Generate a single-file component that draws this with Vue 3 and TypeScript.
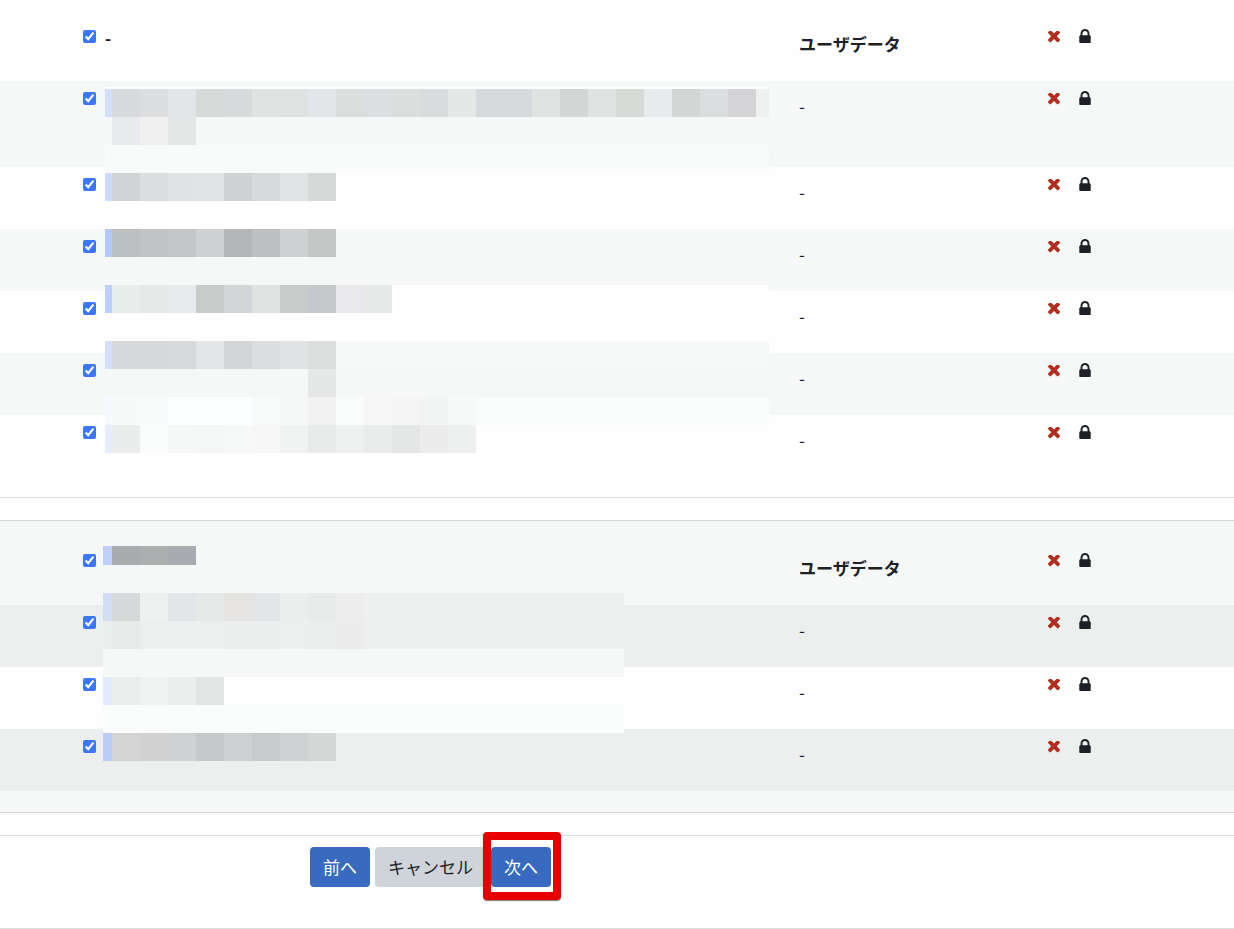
<script setup lang="ts">
interface Item {
  label?: string
  user: string
  tall?: boolean
}

interface Strip {
  height?: number
  fill: string
  cells?: string
}

interface Section {
  id: string
  tone: string
  items: Item[]
  strips: Strip[]
}

const sections: Section[] = [
  {
    id: 'first',
    tone: 'plain',
    items: [
      { label: '-', user: 'ユーザデータ' },
      { user: '-', tall: true },
      { user: '-' },
      { user: '-' },
      { user: '-' },
      { user: '-' },
      { user: '-' },
    ],
    strips: [
      { height: 3, fill: 'fbfdfc' },
      {
        fill: 'eff0f0',
        cells:
          'd2dffa d9dadc dcdddf e4e5e8 d8dad9 d9dadc e1e3e2 e0e2e1 e4e5e8 dcdedd dddee1 dcdedd dadbdd e6e8e7 d8d9dc d8d9dc e1e3e2 d4d6d5 e1e3e2 d8dad8 e9eaed d4d6d5 dcdddf d4d4d6',
      },
      { fill: 'f6f7f7', cells: 'f6f7f7 e9eaed eff0ef e5e7e6' },
      { fill: 'f9fbfa' },
      { fill: 'fefefe', cells: 'ccdbfd d2d3d5 dcdddf e1e2e4 e2e3e5 d1d2d4 d8d9db e2e3e5 d7d9d8' },
      { fill: 'fefefe' },
      { fill: 'f6f8f7', cells: 'b3c9f8 bebfc1 c2c3c5 c5c6c8 cfd0d2 b4b5b7 bebfc1 cfd0d2 c5c7c6' },
      { fill: 'f6f8f7' },
      { fill: 'fefefe', cells: 'bcd0fd ebedec e7e9e8 e9eaed c9cbca d4d5d8 e0e2e1 c9cbca c7c8cb e9e9ed e7e9e8' },
      { fill: 'fefefe' },
      { fill: 'f7f8f8', cells: 'd5dff9 d6d7d9 d7d8da d8d9db e4e5e7 d4d5d7 dbdcde e1e2e4 dddfde' },
      { fill: 'f6f7f7', cells: 'f6f7f7 f6f7f7 f6f7f7 f6f7f7 f6f7f7 f6f7f7 f6f7f7 f6f7f7 e6e8e7' },
      {
        fill: 'fbfdfc',
        cells: 'f6f9fd f8faf9 f9fbfa fdfffe fdfffe fdfffe f9fbfa f5f6f6 f3f2f2 fafbfb f5f6f5 f4f5f4 f2f4f3 f8faf9',
      },
      {
        fill: 'fefefe',
        cells: 'e6edfe ebeded fafbfb f6f8f7 f5f7f6 f7f8f8 f8f7f8 f0f1f1 e9ebea eff1f0 eaeceb e5e6e6 ebeceb eeefef',
      },
    ],
  },
  {
    id: 'second',
    tone: 'tinted',
    items: [{ user: 'ユーザデータ' }, { user: '-' }, { user: '-' }, { user: '-' }],
    strips: [
      { height: 19, fill: 'f6f8f7', cells: 'bfd0fb a8acaf adaeb0 a8abaf' },
      { fill: 'f6f8f7' },
      { fill: 'eef0ef', cells: 'd2def5 d7d8da eff0f0 e4e5e8 e7e9e8 e5e4e2 e4e5e8 eceeed e9ebea ecedec' },
      { fill: 'edefee', cells: 'eceeed e9ebea edefee edefee edefee eceeed eceeed edefee eceeed ebeceb' },
      { fill: 'f6f8f7' },
      { fill: 'fefefe', cells: 'e2eafe eceeed f0f2f1 eceeed e3e5e4' },
      { fill: 'fbfdfc' },
      { fill: 'edefee', cells: 'bdcef4 d4d4d4 d1d1d2 d0d1d3 c7c8ca cfd0d2 c9cacd d0d1d3 d5d7d6' },
    ],
  },
]

const cellsOf = (strip: Strip): string[] => (strip.cells ? strip.cells.split(' ') : [])
</script>

<template>
  <form class="page" @submit.prevent>
    <section v-for="s in sections" :key="s.id" class="section" :class="s.tone">
      <div v-for="(item, i) in s.items" :key="i" class="row" :class="{ tall: item.tall }">
        <div class="pick">
          <input
            :id="`${s.id}-${i}`"
            type="checkbox"
            checked
            :aria-label="item.label ? undefined : `項目 ${i + 1}`"
          />
        </div>
        <label class="name" :for="`${s.id}-${i}`">{{ item.label }}</label>
        <div class="user" :class="{ heading: i === 0 }">{{ item.user }}</div>
        <div class="state">
          <svg class="cross" viewBox="302 434 1188 1188" aria-hidden="true">
            <path
              d="M1490 1322q0 40-28 68l-136 136q-28 28-68 28t-68-28l-294-294-294 294q-28 28-68 28t-68-28l-136-136q-28-28-28-68t28-68l294-294-294-294q-28-28-28-68t28-68l136-136q28-28 68-28t68 28l294 294 294-294q28-28 68-28t68 28l136 136q28 28 28 68t-28 68l-294 294 294 294q28 28 28 68z"
            />
          </svg>
          <svg class="lock" viewBox="320 128 1152 1408" aria-hidden="true">
            <path
              d="M640 768h512v-192q0-106-75-181t-181-75-181 75-75 181v192zm832 96v576q0 40-28 68t-68 28h-960q-40 0-68-28t-28-68v-576q0-40 28-68t68-28h32v-192q0-184 132-316t316-132 316 132 132 316v192h32q40 0 68 28t28 68z"
            />
          </svg>
        </div>
      </div>
      <div class="mosaic" aria-hidden="true">
        <div
          v-for="(strip, r) in s.strips"
          :key="r"
          class="strip"
          :style="{ height: `${strip.height ?? 28}px`, background: `#${strip.fill}` }"
        >
          <span v-for="(c, k) in cellsOf(strip)" :key="k" class="cell" :style="{ background: `#${c}` }"></span>
        </div>
      </div>
    </section>

    <div class="actions">
      <button type="button" class="btn primary">前へ</button>
      <button type="button" class="btn secondary">キャンセル</button>
      <span class="marked">
        <button type="submit" class="btn primary">次へ</button>
      </span>
    </div>
  </form>
</template>

<style>
body {
  margin: 0;
  background: #fefefe;
}
</style>

<style scoped>
.page {
  color: #1d2125;
  font-family: 'Noto Sans CJK JP', 'Noto Sans', sans-serif;
  font-size: 17px;
  line-height: 26px;
}

.section {
  position: relative;
  border-bottom: 1px solid #dcdedd;
}

.plain {
  padding: 19px 0 20px;
}

.tinted {
  margin: 22px 0;
  padding: 22px 0 21px;
  border-top: 1px solid #d5d7d6;
  border-bottom-color: #d5d7d6;
  background: #f6f8f7;
}

.row {
  display: grid;
  grid-template-columns: 105px 694fr 249fr 186fr;
  box-sizing: border-box;
  min-height: 62px;
}

.row.tall {
  min-height: 86px;
}

.plain .row:nth-child(even) {
  background: #f6f8f7;
}

.tinted .row:nth-child(even) {
  background: #edefee;
}

.tinted .row:nth-child(3) {
  background: #fefefe;
}

.pick {
  display: flex;
  align-items: flex-start;
  padding: 11px 0 0 83px;
}

.pick input {
  width: 13px;
  height: 13px;
  margin: 0;
  accent-color: #3b76ff;
}

.name {
  padding-top: 6px;
  font-weight: 700;
}

.user {
  padding-top: 12px;
}

.heading {
  font-weight: 700;
}

.state {
  display: flex;
  align-items: flex-end;
  align-self: start;
  gap: 19px;
  padding-top: 10px;
}

.cross {
  width: 12px;
  height: 12px;
  fill: #b12f21;
}

.lock {
  width: 12px;
  height: 14px;
  fill: #1d2125;
}

.mosaic {
  position: absolute;
  top: 86px;
  left: 105px;
  width: 664px;
}

.tinted .mosaic {
  top: 25px;
  left: 103px;
  width: 521px;
}

.strip {
  display: flex;
}

.cell {
  flex: 0 0 28px;
}

.cell:first-child {
  flex-basis: 7px;
}

.tinted .cell:first-child {
  flex-basis: 9px;
}

.actions {
  display: flex;
  gap: 5px;
  padding: 11px 0 41px 310px;
  border-top: 1px solid #dfe1e0;
  border-bottom: 1px solid #dcdedd;
}

.btn {
  height: 40px;
  padding: 0 13px;
  border: 0;
  border-radius: 4px;
  font: inherit;
  cursor: pointer;
}

.primary {
  background: #386bc0;
  color: #fff;
}

.secondary {
  background: #ced4d9;
  color: #1d2125;
}

.marked {
  position: relative;
  display: flex;
}

.marked::after {
  content: '';
  position: absolute;
  inset: -15px -10px -13px -8px;
  border: 8px solid #e60000;
  border-radius: 4px;
  box-shadow: 0 1px 1px #777;
  pointer-events: none;
}
</style>
